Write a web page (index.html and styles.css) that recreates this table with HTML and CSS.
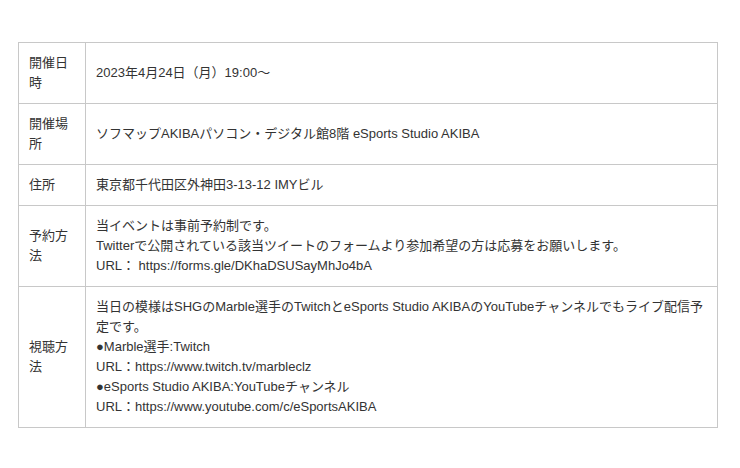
FILE: index.html
```html
<!DOCTYPE html>
<html lang="ja">
<head>
  <meta charset="UTF-8" />
  <meta name="viewport" content="width=device-width, initial-scale=1.0" />
  <title>イベント概要</title>
  <link rel="stylesheet" href="styles.css">
</head>
<body>
  <div class="wrap">
    <table class="info-table">
      <tr>
        <th>開催日時</th>
        <td>2023年4月24日（月）19:00～</td>
      </tr>
      <tr>
        <th>開催場所</th>
        <td>ソフマップAKIBAパソコン・デジタル館8階 eSports Studio AKIBA</td>
      </tr>
      <tr>
        <th>住所</th>
        <td>東京都千代田区外神田3-13-12 IMYビル</td>
      </tr>
      <tr>
        <th>予約方法</th>
        <td>当イベントは事前予約制です。<br>Twitterで公開されている該当ツイートのフォームより参加希望の方は応募をお願いします。<br>URL： https://forms.gle/DKhaDSUSayMhJo4bA</td>
      </tr>
      <tr>
        <th>視聴方法</th>
        <td>当日の模様はSHGのMarble選手のTwitchとeSports Studio AKIBAのYouTubeチャンネルでもライブ配信予定です。<br>●Marble選手:Twitch<br>URL：https://www.twitch.tv/marbleclz<br>●eSports Studio AKIBA:YouTubeチャンネル<br>URL：https://www.youtube.com/c/eSportsAKIBA</td>
      </tr>
    </table>
  </div>
</body>
</html>
```

FILE: styles.css
```css
body {
  margin: 0;
  background: #fff;
  font-family: "Liberation Sans", "Noto Sans CJK JP", sans-serif;
  font-size: 13px;
  color: #333;
}
.wrap {
  padding: 42px 22px 0 18px;
}
.info-table {
  width: 700px;
  border-collapse: collapse;
  line-height: 20px;
}
.info-table th,
.info-table td {
  border: 1px solid #c8c8c8;
  padding: 10px;
  vertical-align: middle;
  text-align: left;
  font-weight: normal;
}
.info-table th {
  width: 46px;
}
```
